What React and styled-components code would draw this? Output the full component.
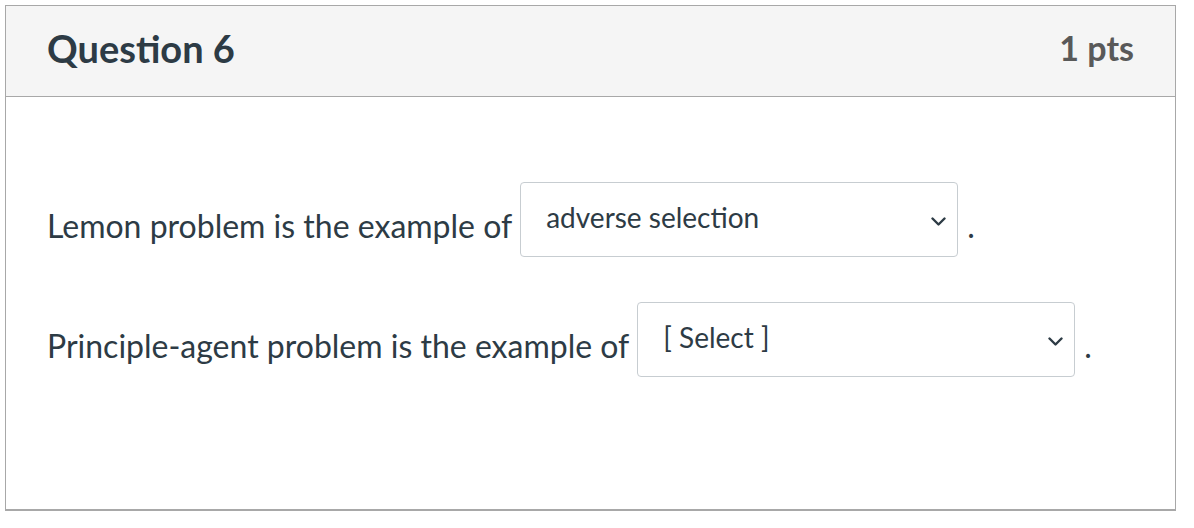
import React from 'react';
import styled, { createGlobalStyle } from 'styled-components';

const GlobalStyle = createGlobalStyle`
  html, body {
    margin: 0;
    padding: 0;
    background: #fff;
  }
  body {
    font-family: Lato, 'Open Sans', sans-serif;
    color: #2d3b45;
  }
`;

const Page = styled.div`
  padding: 5px 0 0 5px;
`;

const Card = styled.div`
  width: 1171px;
  box-sizing: border-box;
  border: 1px solid #a8a8a8;
  border-bottom-width: 2px;
  background: #fff;
`;

const Header = styled.div`
  height: 91px;
  box-sizing: border-box;
  display: flex;
  align-items: center;
  justify-content: space-between;
  padding: 0 41px 7px 41px;
  background: #f5f5f5;
  border-bottom: 1px solid #a8a8a8;
`;

const Title = styled.h2`
  margin: 0;
  font-size: 38px;
  font-weight: 700;
  color: #2d3b45;
`;

const Points = styled.div`
  font-size: 34px;
  font-weight: 700;
  color: #595959;
`;

const Body = styled.div`
  padding: 85px 41px 132px;
  display: flex;
  flex-direction: column;
  gap: 45px;
`;

const Row = styled.div`
  display: flex;
  align-items: flex-end;
  font-size: 32px;
  line-height: 38px;
`;

const Label = styled.span`
  padding-bottom: 12px;
`;

const SelectBox = styled.div`
  width: ${(p) => p.$width}px;
  height: 75px;
  box-sizing: border-box;
  margin-left: 8px;
  border: 1px solid #c7cdd1;
  border-radius: 4px;
  display: flex;
  align-items: flex-start;
  justify-content: space-between;
  padding: 16px 11px 0 25px;
  font-size: 28px;
  line-height: 36px;
`;

const Chevron = styled.svg`
  width: 15px;
  height: 9px;
  margin-top: 18px;
`;

const Period = styled.span`
  padding: 0 0 12px 9px;
`;

const Dropdown = ({ value, width }) => (
  <SelectBox $width={width}>
    <span>{value}</span>
    <Chevron viewBox="0 0 15 9" fill="none">
      <path d="M1.5 1.5 L7.5 7.5 L13.5 1.5" stroke="#2d3b45" strokeWidth="2.4" strokeLinecap="round" strokeLinejoin="round" />
    </Chevron>
  </SelectBox>
);

export default function App() {
  return (
    <Page>
      <GlobalStyle />
      <Card>
        <Header>
          <Title>Question 6</Title>
          <Points>1 pts</Points>
        </Header>
        <Body>
          <Row>
            <Label>Lemon problem is the example of</Label>
            <Dropdown value="adverse selection" width={438} />
            <Period>.</Period>
          </Row>
          <Row>
            <Label>Principle-agent problem is the example of</Label>
            <Dropdown value="[ Select ]" width={438} />
            <Period>.</Period>
          </Row>
        </Body>
      </Card>
    </Page>
  );
}
